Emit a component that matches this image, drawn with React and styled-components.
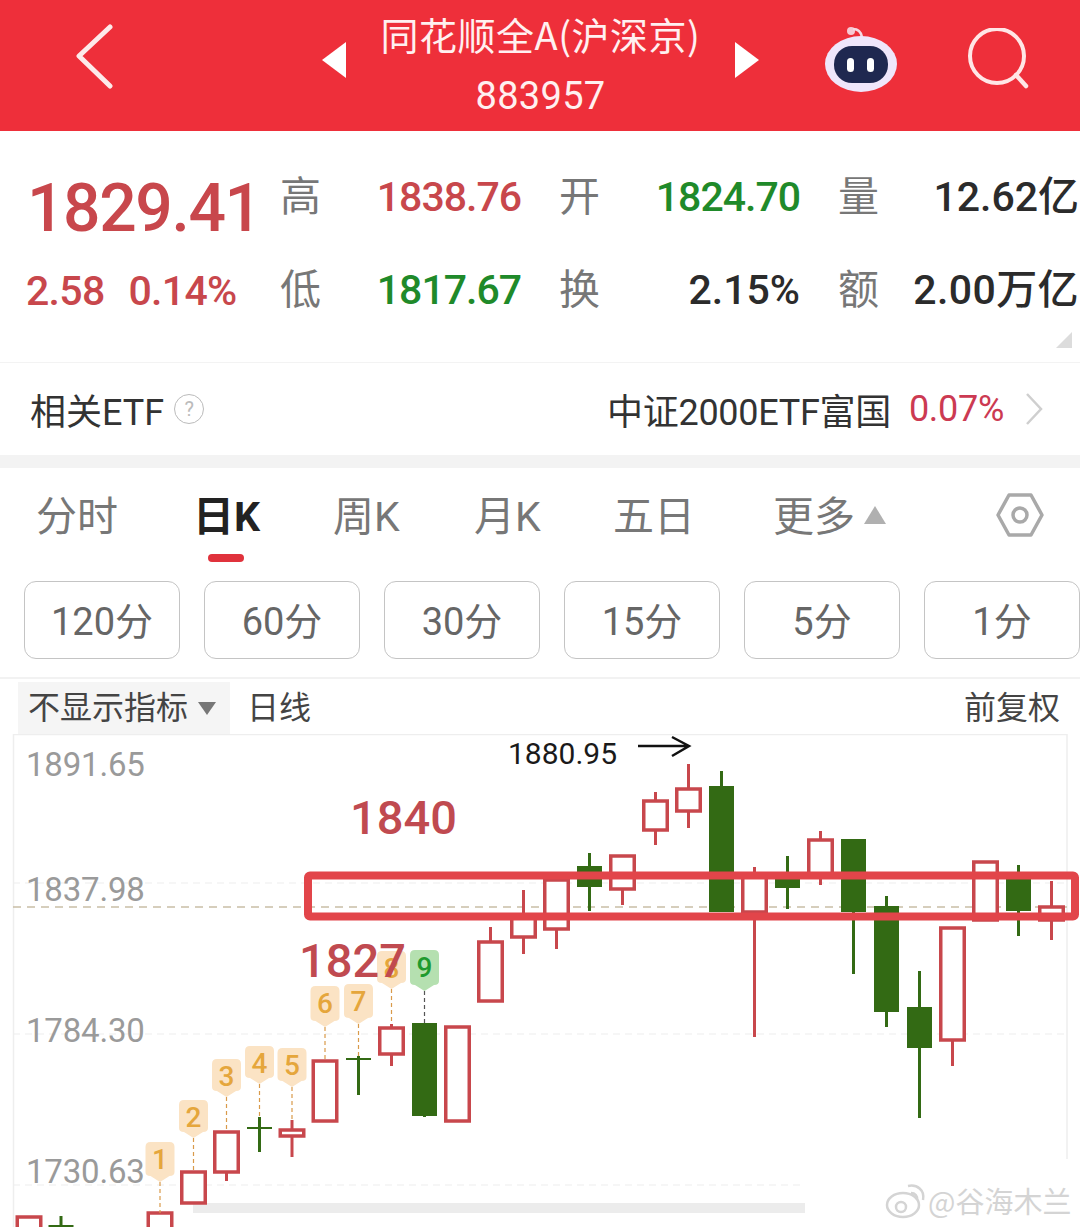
import React from 'react';
import styled, { createGlobalStyle } from 'styled-components';

const FONT = `Roboto, "Noto Sans CJK SC", sans-serif`;
const RED = '#c8474c';
const GREEN = '#336a14';

const GlobalStyle = createGlobalStyle`
  html, body {
    margin: 0;
    padding: 0;
    background: #fff;
    overflow: hidden;
    font-family: ${FONT};
  }
`;

// x, body top, body bottom, wick top, wick bottom
const redCandles = [
  [29, 1218, 1240, 1218, 1240],
  [160, 1214, 1240, 1214, 1240],
  [193.5, 1173, 1204, 1173, 1204],
  [226.5, 1133, 1173, 1133, 1182],
  [292, 1131, 1137, 1121, 1158],
  [325, 1062, 1122, 1062, 1122],
  [391.5, 1029, 1055, 1025, 1067],
  [457.5, 1028, 1122, 1028, 1122],
  [490.5, 943, 1002, 928, 1002],
  [523.5, 918, 938, 891, 955],
  [556.5, 881, 930, 881, 950],
  [622.5, 857, 890, 857, 906],
  [655.5, 802, 831, 793, 846],
  [688.5, 790, 812, 765, 829],
  [754.5, 878, 913, 868, 1038],
  [820.5, 841, 875, 832, 886],
  [952.5, 929, 1041, 929, 1067],
  [985.5, 863, 921, 862, 922],
  [1051.5, 908, 921, 882, 941],
];

const greenCandles = [
  [61, 1226, 1229, 1217, 1240],
  [259.5, 1128, 1130, 1118, 1153],
  [358.5, 1059, 1061, 1057, 1096],
  [424.5, 1024, 1117, 1024, 1118],
  [589.5, 867, 888, 854, 912],
  [721.5, 787, 913, 772, 913],
  [787.5, 873, 889, 857, 910],
  [853.5, 840, 913, 840, 975],
  [886.5, 907, 1013, 897, 1028],
  [919.5, 1008, 1049, 972, 1119],
  [1018.5, 877, 912, 866, 937],
];

// number, centre x, badge top, tip y, dash end y
const badges = [
  [1, 160, 1143, 1183, 1214],
  [2, 193.5, 1101, 1139, 1173],
  [3, 226.5, 1060, 1098, 1133],
  [4, 259.5, 1047, 1085, 1118],
  [5, 292, 1049, 1088, 1121],
  [6, 325, 987, 1028, 1061],
  [7, 358.5, 985, 1025, 1057],
  [8, 391.5, 952, 990, 1025],
  [9, 424.5, 951, 992, 1024],
];

const priceLabels = [
  ['1891.65', 777],
  ['1837.98', 902],
  ['1784.30', 1043],
  ['1730.63', 1184],
];

const tabs = [
  { label: '分时', left: 36 },
  { label: '日K', left: 193, active: true },
  { label: '周K', left: 333 },
  { label: '月K', left: 474 },
  { label: '五日', left: 613 },
];

const intervals = ['120分', '60分', '30分', '15分', '5分', '1分'];

const BackIcon = () => (
  <svg width="40" height="70" viewBox="0 0 40 70">
    <path d="M35 3 L4 32 L35 62" fill="none" stroke="#fdeaea" strokeWidth="5" strokeLinecap="round" strokeLinejoin="round" />
  </svg>
);

const RobotIcon = () => (
  <svg width="74" height="68" viewBox="0 0 74 68">
    <circle cx="27" cy="6" r="4" fill="#f6c9d4" />
    <path d="M29 4 C34 4 37 7 38 12" fill="none" stroke="#f6d8e2" strokeWidth="2.5" />
    <ellipse cx="37" cy="39" rx="36" ry="28" fill="#efe6fb" />
    <rect x="10" y="21" width="54" height="37" rx="18" fill="#1f2850" />
    <rect x="23" y="33" width="7" height="14" rx="3.5" fill="#fff" />
    <rect x="43" y="33" width="7" height="14" rx="3.5" fill="#fff" />
  </svg>
);

const SearchIcon = () => (
  <svg width="62" height="62" viewBox="0 0 62 62">
    <circle cx="30" cy="28" r="27" fill="none" stroke="#ffe6e6" strokeWidth="4" />
    <path d="M49 47 L59 58" stroke="#ffe6e6" strokeWidth="4.5" strokeLinecap="round" />
  </svg>
);

const SettingsIcon = () => (
  <svg width="48" height="48" viewBox="0 0 48 48">
    <path d="M13 4 H35 L46 24 L35 44 H13 L2 24 Z" fill="none" stroke="#a9a9a9" strokeWidth="3.5" strokeLinejoin="round" />
    <circle cx="24" cy="24" r="7" fill="none" stroke="#a9a9a9" strokeWidth="3.5" />
  </svg>
);

const Candle = ({ data, color, hollow }) => {
  const [x, top, bottom, wickTop, wickBottom] = data;
  const half = hollow ? 11.75 : 12.5;
  return (
    <g>
      <line x1={x} x2={x} y1={wickTop} y2={top} stroke={color} strokeWidth="3" />
      <line x1={x} x2={x} y1={bottom} y2={wickBottom} stroke={color} strokeWidth="3" />
      <rect
        x={x - half}
        y={top}
        width={half * 2}
        height={bottom - top}
        fill={hollow ? '#fff' : color}
        stroke={hollow ? color : 'none'}
        strokeWidth={hollow ? 3.5 : 0}
      />
    </g>
  );
};

const Badge = ({ data }) => {
  const [num, x, top, tip, end] = data;
  const green = num === 9;
  const left = x - 14.5;
  const right = x + 14.5;
  const shoulder = tip - 6;
  return (
    <g>
      <line x1={x} x2={x} y1={tip} y2={end} stroke={green ? '#555' : '#d99a4a'} strokeWidth="1.2" strokeDasharray="4 3" />
      <path
        d={`M${left + 5} ${top} H${right - 5} Q${right} ${top} ${right} ${top + 5} V${shoulder - 4} Q${right} ${shoulder} ${right - 5} ${shoulder} L${x} ${tip} L${left + 5} ${shoulder} Q${left} ${shoulder} ${left} ${shoulder - 4} V${top + 5} Q${left} ${top} ${left + 5} ${top} Z`}
        fill={green ? '#b5e0b0' : '#fbe3c4'}
      />
      <BadgeNumber x={x} y={top + 27} $green={green}>{num}</BadgeNumber>
    </g>
  );
};

const Chart = () => (
  <ChartSvg viewBox="0 735 1080 493" width="1080" height="493">
    <line x1="13" x2="1067" y1="735.5" y2="735.5" stroke="#eeeeee" strokeWidth="1.5" />
    <line x1="13.5" x2="13.5" y1="735" y2="1228" stroke="#eeeeee" strokeWidth="1.5" />
    <line x1="1067" x2="1067" y1="735" y2="1160" stroke="#eeeeee" strokeWidth="1.5" />
    {[884, 1035, 1186].map((y) => (
      <line key={y} x1="13" x2="1067" y1={y} y2={y} stroke="#eeeeee" strokeWidth="1.2" strokeDasharray="7 5" />
    ))}
    <line x1="13" x2="1067" y1="908" y2="908" stroke="#c9bfa6" strokeWidth="1.6" strokeDasharray="8 6" />

    {priceLabels.map(([text, y]) => (
      <PriceLabel key={text} x="26" y={y}>{text}</PriceLabel>
    ))}

    <rect x="193" y="1204" width="612" height="10" fill="#ececec" />

    {redCandles.map((c) => (
      <Candle key={c[0]} data={c} color={RED} hollow />
    ))}
    {greenCandles.map((c) => (
      <Candle key={c[0]} data={c} color={GREEN} />
    ))}
    {badges.map((b) => (
      <Badge key={b[0]} data={b} />
    ))}

    <rect x="308" y="876.5" width="767" height="41" rx="2" fill="none" stroke="#e2454a" strokeWidth="8" />

    <HighLabel x="508" y="765">1880.95</HighLabel>
    <path d="M638 747 H688 M672 738 L689 747 L672 757" fill="none" stroke="#111" strokeWidth="2.5" />
    <NoteLabel x="350" y="835">1840</NoteLabel>
    <NoteLabel x="299" y="978">1827</NoteLabel>

    <rect x="805" y="1165" width="261" height="63" fill="#fff" />
    <g fill="none" stroke="#d4d4d4" strokeWidth="2.5">
      <ellipse cx="903" cy="1206" rx="16" ry="12" />
      <circle cx="901" cy="1208" r="5" />
      <path d="M908 1187 C917 1185 925 1191 923 1201" />
      <path d="M911 1194 C915 1194 918 1197 917 1201" />
    </g>
    <Watermark x="928" y="1214">@谷海木兰</Watermark>
  </ChartSvg>
);

const App = () => (
  <Page>
    <GlobalStyle />
    <Header>
      <BackButton><BackIcon /></BackButton>
      <Switcher>
        <Arrow $dir="left" />
        <TitleBlock>
          <Title>同花顺全A(沪深京)</Title>
          <Code>883957</Code>
        </TitleBlock>
        <Arrow $dir="right" />
      </Switcher>
      <Actions>
        <RobotIcon />
        <SearchIcon />
      </Actions>
    </Header>

    <Quote>
      <PriceCol>
        <MainPrice>1829.41</MainPrice>
        <ChangeRow>
          <Change>2.58</Change>
          <Change>0.14%</Change>
        </ChangeRow>
      </PriceCol>
      <StatGrid>
        <Stat><StatName>高</StatName><StatValue $color="#c8474c" $spacing="-1px">1838.76</StatValue></Stat>
        <Stat><StatName>开</StatName><StatValue $color="#1f8a2a" $spacing="-1px">1824.70</StatValue></Stat>
        <Stat><StatName>量</StatName><StatValue>12.62亿</StatValue></Stat>
        <Stat><StatName>低</StatName><StatValue $color="#1f8a2a" $spacing="-1px">1817.67</StatValue></Stat>
        <Stat><StatName>换</StatName><StatValue>2.15%</StatValue></Stat>
        <Stat><StatName>额</StatName><StatValue $spacing="0.4px">2.00万亿</StatValue></Stat>
      </StatGrid>
      <Corner />
    </Quote>

    <EtfRow>
      <EtfLeft>
        相关ETF
        <HelpDot>?</HelpDot>
      </EtfLeft>
      <EtfRight>
        中证2000ETF富国
        <EtfPct>0.07%</EtfPct>
        <svg width="18" height="34" viewBox="0 0 18 34">
          <path d="M2 2 L16 17 L2 32" fill="none" stroke="#cfcfcf" strokeWidth="2.5" />
        </svg>
      </EtfRight>
    </EtfRow>
    <Gap />

    <Tabs>
      {tabs.map((t) => (
        <Tab key={t.label} $left={t.left} $active={t.active}>
          {t.label}
        </Tab>
      ))}
      <MoreTab>
        更多
        <MoreArrow />
      </MoreTab>
      <SettingsSlot><SettingsIcon /></SettingsSlot>
    </Tabs>

    <Intervals>
      {intervals.map((i) => (
        <IntervalButton key={i}>{i}</IntervalButton>
      ))}
    </Intervals>

    <IndicatorBar>
      <IndicatorPill>
        不显示指标
        <PillArrow />
      </IndicatorPill>
      <BarText>日线</BarText>
      <AdjustText>前复权</AdjustText>
    </IndicatorBar>

    <Chart />
  </Page>
);

export default App;

const Page = styled.div`
  width: 1080px;
  height: 1228px;
  overflow: hidden;
  background: #fff;
`;

const Header = styled.header`
  height: 131px;
  background: #ee2f3a;
  display: grid;
  grid-template-columns: 322px 437px 1fr;
  align-items: center;
`;

const BackButton = styled.div`
  display: flex;
  padding: 0 0 13px 75px;
`;

const Switcher = styled.div`
  display: flex;
  align-items: center;
  justify-content: space-between;
`;

const Arrow = styled.span`
  width: 0;
  height: 0;
  margin-bottom: 11px;
  border-top: 18px solid transparent;
  border-bottom: 18px solid transparent;
  ${(p) => (p.$dir === 'left' ? 'border-right: 24px solid #fff;' : 'border-left: 24px solid #fff;')}
`;

const TitleBlock = styled.div`
  display: flex;
  flex-direction: column;
  align-items: center;
  color: #fff0f0;
`;

const Title = styled.div`
  font-family: "Noto Sans CJK SC", sans-serif;
  font-size: 38px;
  line-height: 60px;
  letter-spacing: 0.5px;
  white-space: nowrap;
  margin-top: -2px;
`;

const Code = styled.div`
  font-size: 38px;
  line-height: 60px;
  letter-spacing: 0.3px;
  margin-top: 2px;
`;

const Actions = styled.div`
  display: flex;
  align-items: center;
  padding: 0 0 13px 65px;
  gap: 69px;
`;

const Quote = styled.section`
  position: relative;
  height: 232px;
  display: flex;
  border-bottom: 1px solid #f3f3f3;
  box-sizing: border-box;
`;

const PriceCol = styled.div`
  width: 282px;
  padding-left: 26px;
  box-sizing: border-box;
`;

const MainPrice = styled.div`
  font-size: 66px;
  font-weight: 500;
  letter-spacing: -1.4px;
  line-height: 80px;
  margin-top: 38px;
  padding-left: 1px;
  color: ${RED};
`;

const ChangeRow = styled.div`
  display: flex;
  gap: 24px;
  margin-top: 10px;
`;

const Change = styled.span`
  font-size: 41px;
  font-weight: 500;
  letter-spacing: -0.7px;
  line-height: 64px;
  color: ${RED};
`;

const StatGrid = styled.div`
  display: grid;
  grid-template-columns: repeat(3, 239px);
  grid-auto-rows: 93px;
  column-gap: 40px;
  padding-top: 19px;
`;

const Stat = styled.div`
  display: flex;
  align-items: center;
  justify-content: space-between;
`;

const StatName = styled.span`
  font-family: "Noto Sans CJK SC", sans-serif;
  font-size: 41px;
  color: #777;
  margin: -8px 0 0 -2px;
`;

const StatValue = styled.span`
  font-size: 41px;
  line-height: 48px;
  font-weight: 500;
  letter-spacing: ${(p) => p.$spacing || '0'};
  white-space: nowrap;
  color: ${(p) => p.$color || '#2b2b2b'};
`;

const Corner = styled.span`
  position: absolute;
  right: 8px;
  bottom: 14px;
  width: 16px;
  height: 16px;
  background: #dcdcdc;
  clip-path: polygon(100% 0, 100% 100%, 0 100%);
`;

const EtfRow = styled.section`
  height: 92px;
  display: flex;
  align-items: center;
  justify-content: space-between;
  padding: 0 37px 0 30px;
  font-size: 36px;
  color: #333;
`;

const EtfLeft = styled.div`
  display: flex;
  align-items: center;
  gap: 10px;
`;

const HelpDot = styled.span`
  width: 28px;
  height: 28px;
  border: 1.5px solid #bbb;
  border-radius: 50%;
  display: flex;
  align-items: center;
  justify-content: center;
  font-size: 20px;
  color: #bbb;
`;

const EtfRight = styled.div`
  display: flex;
  align-items: center;
  white-space: nowrap;
  letter-spacing: -0.3px;
`;

const EtfPct = styled.span`
  font-size: 36px;
  color: #cc3a52;
  margin: 0 21px 0 18px;
`;

const Gap = styled.div`
  height: 13px;
  background: #f3f3f3;
`;

const Tabs = styled.nav`
  position: relative;
  height: 113px;
`;

const Tab = styled.span`
  position: absolute;
  left: ${(p) => p.$left}px;
  top: 22px;
  font-size: 41px;
  line-height: 54px;
  color: ${(p) => (p.$active ? '#222' : '#777')};
  font-weight: ${(p) => (p.$active ? 700 : 400)};
  ${(p) =>
    p.$active &&
    `&::after {
      content: '';
      position: absolute;
      left: 15px;
      top: 64px;
      width: 36px;
      height: 8px;
      border-radius: 4px;
      background: #e0323c;
    }`}
`;

const MoreTab = styled(Tab)`
  left: 773px;
  display: flex;
  align-items: center;
`;

const MoreArrow = styled.span`
  width: 0;
  height: 0;
  margin: 0 0 4px 9px;
  border-left: 11px solid transparent;
  border-right: 11px solid transparent;
  border-bottom: 18px solid #b0b0b0;
`;

const SettingsSlot = styled.span`
  position: absolute;
  left: 996px;
  top: 23px;
`;

const Intervals = styled.div`
  display: flex;
  gap: 24px;
  padding-left: 24px;
  height: 96px;
  border-bottom: 2px solid #f2f2f2;
  box-sizing: content-box;
`;

const IntervalButton = styled.div`
  flex: 0 0 156px;
  height: 78px;
  box-sizing: border-box;
  padding-bottom: 3px;
  border: 1.5px solid #c4c4c4;
  border-radius: 12px;
  display: flex;
  align-items: center;
  justify-content: center;
  font-size: 38px;
  color: #666;
`;

const IndicatorBar = styled.div`
  display: flex;
  align-items: center;
  height: 55px;
  padding: 3px 20px 0 18px;
  box-sizing: border-box;
  font-size: 32px;
  line-height: 44px;
  color: #444;
`;

const IndicatorPill = styled.div`
  width: 212px;
  height: 52px;
  box-sizing: border-box;
  padding: 0 0 0 10px;
  background: #f5f5f5;
  display: flex;
  align-items: center;
`;

const PillArrow = styled.span`
  width: 0;
  height: 0;
  margin-left: 10px;
  border-left: 9px solid transparent;
  border-right: 9px solid transparent;
  border-top: 13px solid #777;
`;

const BarText = styled.span`
  margin: 0 0 0 17px;
`;

const AdjustText = styled.span`
  margin: 0 0 0 auto;
`;

const ChartSvg = styled.svg`
  display: block;
`;

const PriceLabel = styled.text`
  font-family: ${FONT};
  font-size: 33px;
  letter-spacing: -0.2px;
  fill: #9a9a9a;
`;

const HighLabel = styled.text`
  font-family: ${FONT};
  font-size: 30px;
  fill: #1a1a1a;
`;

const NoteLabel = styled.text`
  font-family: ${FONT};
  font-size: 47px;
  font-weight: 500;
  fill: #c04a50;
`;

const BadgeNumber = styled.text`
  font-family: ${FONT};
  font-size: 28px;
  font-weight: 500;
  text-anchor: middle;
  fill: ${(p) => (p.$green ? '#1f9a2e' : '#e5a63c')};
`;

const Watermark = styled.text`
  font-family: "Noto Sans CJK SC", sans-serif;
  font-size: 29px;
  fill: #d4d4d4;
`;
